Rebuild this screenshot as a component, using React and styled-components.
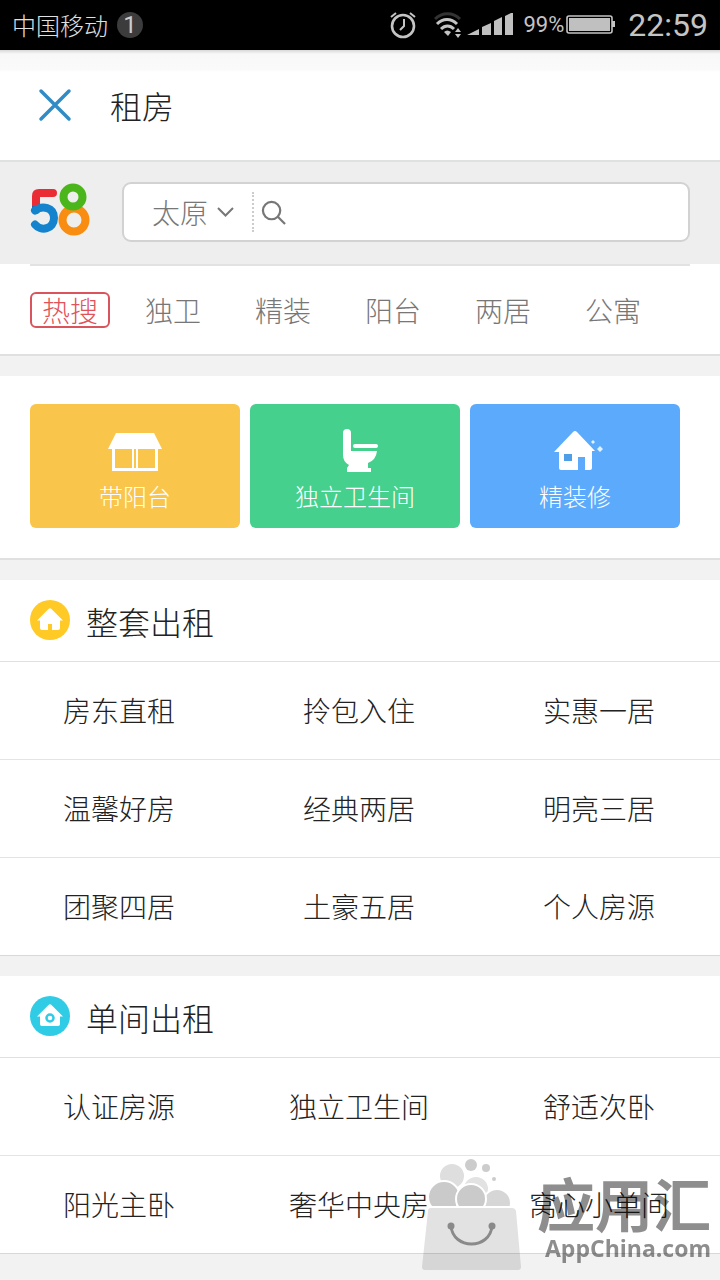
import React, { useState } from "react";
import styled, { createGlobalStyle } from "styled-components";

const GlobalStyle = createGlobalStyle`
  * {
    box-sizing: border-box;
  }
  body {
    margin: 0;
    background: #f2f2f2;
    color: #222;
    font-family: "Noto Sans CJK SC", "Noto Sans", sans-serif;
    font-weight: 300;
  }
  a {
    color: inherit;
    text-decoration: none;
  }
`;

// Phone status bar
const StatusBar = styled.div`
  display: flex;
  align-items: center;
  height: 50px;
  padding: 0 12px;
  background: #000;
  color: #c4c4c4;
  font-size: 24px;
  line-height: 50px;
`;

const Carrier = styled.span`
  color: #e0e0e0;
`;

const Badge = styled.span`
  width: 26px;
  height: 26px;
  margin-left: 9px;
  margin-right: auto;
  border-radius: 50%;
  background: #3c3c3c;
  color: #ccc;
  font-family: Roboto, sans-serif;
  font-weight: 400;
  font-size: 24px;
  line-height: 26px;
  text-align: center;
`;

const Battery = styled.span`
  font-family: Roboto, sans-serif;
  font-weight: 400;
  font-size: 22px;
  margin-left: 8px;
`;

const Clock = styled.span`
  font-family: Roboto, sans-serif;
  font-weight: 400;
  font-size: 32px;
  margin-left: 13px;
`;

// Title bar
const TitleBar = styled.header`
  display: flex;
  align-items: center;
  height: 112px;
  padding: 0 38px;
  gap: 38px;
  background: linear-gradient(to bottom, #d8d8d8, #f8f8f8 4px, #fafafa 20px, #fff 22px);
  border-bottom: 2px solid #dfe0e0;
`;

const CloseButton = styled.button`
  display: flex;
  padding: 0;
  border: 0;
  background: none;
`;

const Title = styled.h1`
  margin: 0;
  font-size: 32px;
  line-height: 48px;
  font-weight: 300;
`;

// Search area
const SearchBar = styled.form`
  display: flex;
  align-items: center;
  height: 102px;
  padding: 0 30px 2px;
  gap: 32px;
  background: #eee;
`;

const SearchBox = styled.div`
  display: flex;
  align-items: center;
  flex: 1;
  height: 60px;
  background: #fff;
  border: 2px solid #d2d2d2;
  border-radius: 9px;
`;

const City = styled.label`
  display: flex;
  align-items: center;
  height: 40px;
  padding: 0 18px 0 28px;
  gap: 9px;
  border-right: 2px dotted #ccc;
`;

const CitySelect = styled.select`
  appearance: none;
  width: 56px;
  height: 40px;
  padding: 0;
  border: 0;
  background: none;
  color: #777;
  font: inherit;
  font-size: 28px;
`;

const SearchButton = styled.button`
  display: flex;
  padding: 0 0 0 7px;
  border: 0;
  background: none;
`;

const SearchInput = styled.input`
  flex: 1;
  min-width: 0;
  height: 52px;
  padding: 0 12px;
  border: 0;
  outline: 0;
  background: none;
  font: inherit;
  font-size: 28px;
`;

// Hot words
const HotPanel = styled.nav`
  padding: 0 30px;
  background: #fff;
  border-bottom: 2px solid #e0e0e0;
`;

const HotRow = styled.div`
  display: flex;
  align-items: center;
  height: 90px;
  gap: 54px;
  border-top: 2px solid #e2e2e2;
  color: #777;
  font-size: 28px;
  line-height: 32px;
`;

const HotTag = styled.span`
  width: 80px;
  height: 36px;
  margin-right: -19px;
  border: 2px solid #d9545c;
  border-radius: 6px;
  color: #e2525a;
  text-align: center;
`;

// Feature tiles
const Tiles = styled.section`
  display: grid;
  grid-template-columns: repeat(3, 1fr);
  gap: 10px;
  margin-top: 20px;
  padding: 28px 40px 30px 30px;
  background: #fff;
  border-bottom: 2px solid #e0e0e0;
`;

const Tile = styled.a`
  display: flex;
  flex-direction: column;
  align-items: center;
  height: 124px;
  padding-top: 24px;
  border-radius: 6px;
  background: ${(props) => props.$color};
  color: #fff;
  font-size: 24px;
  line-height: 48px;
`;

// Category sections
const Section = styled.section`
  margin-top: 20px;
  background: #fff;
  border-bottom: 1px solid #d8d8d8;
`;

const SectionHead = styled.div`
  display: flex;
  align-items: center;
  height: 82px;
  padding: 0 30px 2px;
  gap: 16px;
  border-bottom: 1px solid #e0e0e0;
`;

const SectionTitle = styled.h2`
  margin: 0;
  padding-top: 3px;
  font-size: 32px;
  line-height: 48px;
  font-weight: 300;
`;

const Grid = styled.div`
  display: grid;
  grid-template-columns: repeat(3, 1fr);
  row-gap: 1px;
  background: #e4e4e4;
`;

const Cell = styled.a`
  height: 97px;
  padding-right: 2px;
  background: #fff;
  font-size: 28px;
  line-height: 97px;
  text-align: center;
`;

// App store mark over the bottom corner
const StoreMark = styled.div`
  position: fixed;
  right: 9px;
  bottom: 8px;
  display: flex;
  align-items: flex-end;
  gap: 16px;
  color: #8e8e8e;
  mix-blend-mode: multiply;
  pointer-events: none;
`;

const StoreText = styled.div`
  display: flex;
  flex-direction: column;
  padding-bottom: 8px;
`;

const StoreName = styled.span`
  font-size: 58px;
  line-height: 60px;
  font-weight: 700;
`;

const StoreUrl = styled.span`
  font-family: "Open Sans", sans-serif;
  font-size: 23px;
  line-height: 32px;
  font-weight: 700;
  text-align: right;
`;

const AlarmIcon = () => (
  <svg width="28" height="28" viewBox="0 0 28 28" fill="none" stroke="#c4c4c4" strokeWidth="2.6">
    <circle cx="14" cy="15" r="11" />
    <path d="M15 8v7l-4 4" strokeWidth="2" />
    <path d="M2 6l5-4M26 6l-5-4" strokeWidth="2" />
  </svg>
);

const WifiSvg = styled.svg`
  margin: 0 3px 0 17px;
`;

const WifiIcon = () => (
  <WifiSvg width="30" height="28" viewBox="0 0 30 28" fill="none">
    <path d="M1 8c7-7 18-7 25 0" stroke="#333" strokeWidth="3" />
    <path d="M3 13c6-6 14-6 20 0" stroke="#c4c4c4" strokeWidth="3" />
    <path d="M7 18c4-4 9-4 13 0" stroke="#c4c4c4" strokeWidth="3" />
    <path d="M10 21q3-3 7 0l-3 4z" fill="#c4c4c4" />
    <path d="M24 17l3 4h-6zM24 27l3-4h-6z" fill="#c4c4c4" />
  </WifiSvg>
);

const SignalIcon = () => (
  <svg width="48" height="24" viewBox="0 0 48 24" fill="#c0c0c0">
    <path d="M0 22l12-6v6zM15 14l9-4v12h-9zM27 8l8-4v18h-8zM38 3l8-4v23h-8z" />
  </svg>
);

const BatterySvg = styled.svg`
  margin-left: 2px;
`;

const BatteryIcon = () => (
  <BatterySvg width="49" height="20" viewBox="0 0 49 20">
    <rect x="1" y="1" width="45" height="17" rx="2" fill="none" stroke="#c4c4c4" strokeWidth="1.6" />
    <rect x="3" y="3" width="41" height="13" fill="#c0c0c0" />
    <rect x="46" y="6" width="3" height="6" fill="#c4c4c4" />
  </BatterySvg>
);

const Logo = () => (
  <svg width="60" height="60" viewBox="0 0 60 60" fill="none" strokeWidth="8">
    <circle cx="44" cy="38" r="11.500" stroke="#f98d12" />
    <circle cx="43" cy="15" r="9.500" stroke="#4bb51c" />
    <path d="M6 28V14q0-3 3-3h14" stroke="#ea2d35" strokeLinecap="round" />
    <path d="M2 24h8v6H2z" fill="#2d5da8" />
    <path d="M5 28.500C12 23 24 25 24 36S11 50 5 42.500" stroke="#1283cc" strokeLinecap="round" />
  </svg>
);

const BalconyIcon = () => (
  <svg width="54" height="44" viewBox="0 0 54 44">
    <path d="M8 5h38l8 16H0z" fill="#fff" />
    <path d="M5.500 20v21.500h43V20" fill="none" stroke="#fff" strokeWidth="3" />
    <path d="M25 20v21M29 20v21" stroke="#fff" strokeWidth="2" />
  </svg>
);

const ToiletIcon = () => (
  <svg width="46" height="44" viewBox="0 0 46 44" fill="#fff">
    <path d="M15 1q4 0 4 4v18h26q-1 9-9 12v5h3v4H15v-4l2-3q-6-3-6-10V5q0-4 4-4z" />
    <rect x="21" y="16" width="25" height="4" rx="2" />
  </svg>
);

const CottageIcon = () => (
  <svg width="56" height="44" viewBox="-6 0 56 44">
    <path d="M20 4q2-2 4 0l18 19h-3v17q0 2-2 2h-5V29h-7v13H8q-2 0-2-2V24H1z" fill="#fff" />
    <path d="M11 26h8v7h-8z" fill="#4f9fe8" />
    <path d="M40 12l2 2-2 2-2-2zM47 18l3 3-3 3-3-3z" fill="#dff3ff" />
  </svg>
);

const HouseBadge = ({ color, round }) => (
  <svg width="40" height="40" viewBox="0 0 40 40">
    <circle cx="20" cy="20" r="20" fill={color} />
    <path d="M18.500 9q1.500-1.500 3 0L33 20.500h-3V28q0 2-2 2H12q-2 0-2-2v-7.500H7z" fill="#fff" />
    {round ? (
      <circle cx="20" cy="22" r="3.500" fill="none" stroke={color} strokeWidth="2.500" />
    ) : (
      <path d="M18 31v-7h4v7z" fill={color} />
    )}
  </svg>
);

const BagIcon = () => (
  <svg width="100" height="114" viewBox="0 0 100 114">
    <g stroke="#fff" strokeWidth="2">
      <circle cx="31" cy="18" r="13" fill="#dedede" />
      <circle cx="55" cy="31" r="13" fill="#e2e2e2" />
      <circle cx="76" cy="45" r="14" fill="#d6d6d6" />
      <circle cx="23" cy="39" r="16" fill="#cacaca" />
      <circle cx="50" cy="41" r="15" fill="#cacaca" />
    </g>
    <g fill="#ccc">
      <circle cx="50" cy="7" r="6" />
      <circle cx="65" cy="10" r="4" />
      <circle cx="73" cy="21" r="2" />
    </g>
    <path d="M9 48h83v4H9z" fill="#fff" />
    <path d="M10 50h81q3 0 4 3l5 56q0 3-3 3H4q-3 0-3-3L7 53q0-3 3-3z" fill="#e2e2e2" />
    <path d="M30 68c2 24 39 24 41 0" fill="none" stroke="#8a8a8a" strokeWidth="3" />
    <circle cx="30" cy="68" r="3.500" fill="#8a8a8a" />
    <circle cx="71" cy="68" r="3.500" fill="#8a8a8a" />
  </svg>
);

const hotWords = ["独卫", "精装", "阳台", "两居", "公寓"];

const tiles = [
  { title: "带阳台", color: "#fac54b", Icon: BalconyIcon },
  { title: "独立卫生间", color: "#45d08d", Icon: ToiletIcon },
  { title: "精装修", color: "#5caafc", Icon: CottageIcon },
];

const sections = [
  {
    title: "整套出租",
    color: "#ffc926",
    items: ["房东直租", "拎包入住", "实惠一居", "温馨好房", "经典两居", "明亮三居", "团聚四居", "土豪五居", "个人房源"],
  },
  {
    title: "单间出租",
    color: "#30cce6",
    round: true,
    items: ["认证房源", "独立卫生间", "舒适次卧", "阳光主卧", "奢华中央房", "窝心小单间"],
  },
];

function App() {
  const [keyword, setKeyword] = useState("");

  return (
    <>
      <GlobalStyle />
      <StatusBar>
        <Carrier>中国移动</Carrier>
        <Badge>1</Badge>
        <AlarmIcon />
        <WifiIcon />
        <SignalIcon />
        <Battery>99%</Battery>
        <BatteryIcon />
        <Clock>22:59</Clock>
      </StatusBar>

      <TitleBar>
        <CloseButton type="button" aria-label="关闭">
          <svg width="34" height="34" viewBox="0 0 34 34" stroke="#318bc5" strokeWidth="3.500" strokeLinecap="round">
            <path d="M3 3l28 28M31 3L3 31" />
          </svg>
        </CloseButton>
        <Title>租房</Title>
      </TitleBar>

      <SearchBar onSubmit={(e) => e.preventDefault()}>
        <Logo />
        <SearchBox>
          <City>
            <CitySelect aria-label="城市">
              <option>太原</option>
            </CitySelect>
            <svg width="17" height="12" viewBox="0 0 17 12" fill="none" stroke="#777" strokeWidth="2">
              <path d="M1 2l7.500 7.500L16 2" />
            </svg>
          </City>
          <SearchButton aria-label="搜索">
            <svg width="25" height="25" viewBox="0 0 26 26" fill="none" stroke="#777" strokeWidth="2.300">
              <circle cx="11" cy="11" r="9" />
              <path d="M17.500 17.500L25 25" />
            </svg>
          </SearchButton>
          <SearchInput aria-label="关键词" value={keyword} onChange={(e) => setKeyword(e.target.value)} />
        </SearchBox>
      </SearchBar>

      <HotPanel>
        <HotRow>
          <HotTag>热搜</HotTag>
          {hotWords.map((word) => (
            <a key={word} href="#">{word}</a>
          ))}
        </HotRow>
      </HotPanel>

      <Tiles>
        {tiles.map(({ title, color, Icon }) => (
          <Tile key={title} href="#" $color={color}>
            <Icon />
            {title}
          </Tile>
        ))}
      </Tiles>

      {sections.map((section) => (
        <Section key={section.title}>
          <SectionHead>
            <HouseBadge color={section.color} round={section.round} />
            <SectionTitle>{section.title}</SectionTitle>
          </SectionHead>
          <Grid>
            {section.items.map((item) => (
              <Cell key={item} href="#">{item}</Cell>
            ))}
          </Grid>
        </Section>
      ))}

      <StoreMark>
        <BagIcon />
        <StoreText>
          <StoreName>应用汇</StoreName>
          <StoreUrl>AppChina.com</StoreUrl>
        </StoreText>
      </StoreMark>
    </>
  );
}

export default App;
